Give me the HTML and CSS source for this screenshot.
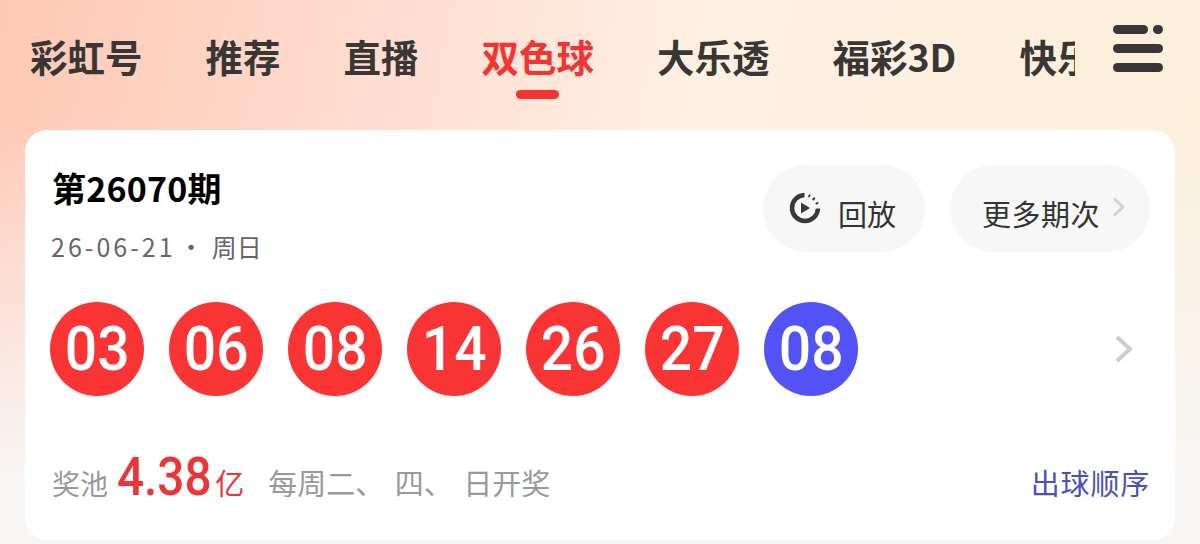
FILE: index.html
```html
<!DOCTYPE html>
<html lang="zh-CN">
<head>
<meta charset="utf-8">
<title>双色球</title>
<link rel="stylesheet" href="styles.css">
</head>
<body>
<header class="nav">
  <div class="tabs">
    <span class="tab">彩虹号</span>
    <span class="tab">推荐</span>
    <span class="tab">直播</span>
    <span class="tab active">双色球</span>
    <span class="tab">大乐透</span>
    <span class="tab">福彩3D</span>
    <span class="tab">快乐8</span>
  </div>
  <div class="menu">
    <svg class="menu-icon" width="50" height="47" viewBox="0 0 50 47"><g fill="#383735"><rect x="0" y="0" width="35" height="9" rx="4.500"/><rect x="40" y="0" width="10" height="9" rx="4.500"/><rect x="0" y="19" width="50" height="9" rx="4.500"/><rect x="0" y="38" width="50" height="9" rx="4.500"/></g></svg>
  </div>
</header>
<main class="card">
  <div class="top">
    <div class="issue">
      <div class="title">第26070期</div>
      <div class="date"><span class="nums">26-06-21</span><span class="dot">·</span><span>周日</span></div>
    </div>
    <div class="actions">
      <div class="pill replay">
        <svg class="play" width="32" height="32" viewBox="0 0 32 32"><path d="M15.500 3 A13 13 0 1 0 29 16.500" fill="none" stroke="#383838" stroke-width="4.500"/><path d="M19.500 3.500 L21 4.200 M24 6.200 L25.500 7.600 M27.600 10.500 L28.400 12" fill="none" stroke="#383838" stroke-width="3"/><path d="M12 10.500 L21 16 L12 21.500 Z" fill="#383838"/></svg>
        <span class="pill-text">回放</span>
      </div>
      <div class="pill more">
        <span class="pill-text">更多期次</span>
        <svg class="more-chev" width="14" height="20" viewBox="0 0 14 20"><path d="M2 1.500 L11 10 L2 18.500" fill="none" stroke="#d2d2d2" stroke-width="3"/></svg>
      </div>
    </div>
  </div>
  <div class="balls">
    <div class="ball"><span>03</span></div>
    <div class="ball"><span>06</span></div>
    <div class="ball"><span>08</span></div>
    <div class="ball"><span>14</span></div>
    <div class="ball"><span>26</span></div>
    <div class="ball"><span>27</span></div>
    <div class="ball blue"><span>08</span></div>
    <svg class="chev" width="20" height="28" viewBox="0 0 20 28"><path d="M3 2 L16 14 L3 26" fill="none" stroke="#cccccc" stroke-width="4"/></svg>
  </div>
  <div class="foot">
    <span class="label">奖池</span>
    <span class="amount">4.38</span>
    <span class="unit">亿</span>
    <span class="sched">每周二、 四、 日开奖</span>
    <span class="order">出球顺序</span>
  </div>
</main>
</body>
</html>
```
FILE: styles.css
```css
* { box-sizing: border-box; }
html, body { margin: 0; height: 544px; overflow: hidden; }
body {
  width: 1200px;
  font-family: "Noto Sans CJK SC", "Noto Sans", sans-serif;
  background:
    linear-gradient(180deg, rgba(248,246,245,0) 0, rgba(248,246,245,0) 120px, #f8f6f5 480px),
    linear-gradient(100deg, #ffc8b5 0%, #ffe0d4 35%, #fff0e2 55%, #fbf0da 100%);
}
.nav { display: flex; height: 130px; }
.tabs {
  width: 1075px; padding: 29px 0 0 30px;
  display: flex; gap: 63px; overflow: hidden; flex: none;
}
.tab {
  flex: none; position: relative; height: 54px;
  font-size: 37.500px; line-height: 54px; font-weight: 700;
  color: #383735;
  white-space: nowrap;
}
.tab.active { color: #f53333; }
.tab.active::after {
  content: ""; position: absolute; left: 34px; top: 61px;
  width: 43px; height: 9px; border-radius: 5px; background: #f53333;
}
.menu {
  flex: 1; padding: 25px 0 0 38px;
  background: linear-gradient(90deg, #fcefdc 0%, #fcf0dc 100%);
  height: 100px;
}
.menu-icon { display: block; }
.card {
  margin: 0 25px; width: 1150px; height: 410px;
  background: #fff; border-radius: 22px;
  padding: 33px 25px 0;
  display: flex; flex-direction: column;
}
.top { display: flex; justify-content: space-between; height: 139px; }
.issue { padding-left: 2px; }
.title { font-size: 34px; line-height: 50px; font-weight: 700; color: #000; letter-spacing: 0.2px; }
.date {
  display: flex; align-items: center; margin: 15px 0 0 -1px;
  font-size: 25px; line-height: 36px; color: #666;
}
.nums { letter-spacing: 3px; }
.dot { margin: 0 8px 0 3px; font-weight: 400; }
.actions { display: flex; gap: 25px; height: 87px; margin-top: 2px; }
.pill {
  height: 87px; border-radius: 44px; background: #f7f7f7;
  display: flex; align-items: center; color: #333;
  font-size: 29px;
}
.pill-text { margin-top: 9px; }
.replay { width: 162px; padding-left: 26px; gap: 17px; }
.play { margin-top: -2px; }
.more { width: 200px; padding-left: 32px; gap: 12px; }
.more .pill-text { letter-spacing: 0.5px; }
.more-chev { margin-top: -4px; }
.balls { display: flex; gap: 25px; align-items: center; height: 94px; }
.ball {
  width: 94px; height: 94px; border-radius: 50%;
  background: #f93434; color: #fff; flex: none;
  display: flex; align-items: center; justify-content: center;
  font-family: Roboto, sans-serif; font-size: 62px; font-weight: 500;
}
.ball span { display: block; transform: scaleX(0.92); line-height: 94px; }
.ball.blue { background: #5252f7; }
.chev { margin-left: auto; margin-right: 16px; }
.foot { display: flex; align-items: baseline; margin-top: 51px; height: 60px; color: #999; }
.label { font-size: 28px; margin-left: 2px; }
.amount {
  font-family: Roboto, sans-serif; font-size: 53px; font-weight: 500;
  color: #ea3636; margin-left: 9px; margin-right: -11px; line-height: 60px;
  transform: scaleX(0.9); transform-origin: left center;
}
.unit { font-size: 29px; color: #ea3636; margin-left: 4px; }
.sched { font-size: 29px; margin-left: 24px; word-spacing: 4px; }
.order { font-size: 29px; margin-left: auto; color: #4a4fc7; letter-spacing: 0.8px; }
```
